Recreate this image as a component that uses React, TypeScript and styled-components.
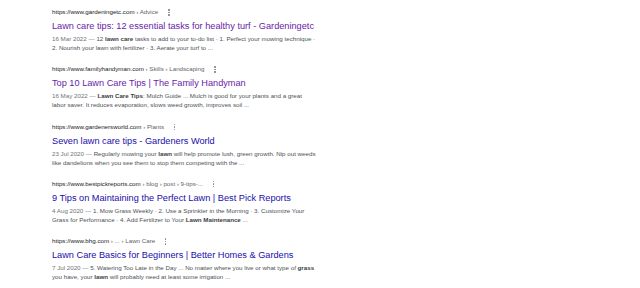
import React from 'react';
import styled, { createGlobalStyle } from 'styled-components';

const Global = createGlobalStyle`
  html, body {
    margin: 0;
    background: #ffffff;
    font-family: Arial, "Liberation Sans", sans-serif;
  }
`;

const Page = styled.div`
  width: 640px;
  height: 288px;
  padding: 7px 0 0 52px;
  box-sizing: border-box;
  display: flex;
  flex-direction: column;
  gap: 12.25px;
  overflow: hidden;
`;

const Result = styled.div`
  display: flex;
  flex-direction: column;
`;

const UrlRow = styled.div`
  height: 10px;
  line-height: 10px;
  font-size: 6.2px;
  color: #202124;
  white-space: nowrap;
`;

const Crumbs = styled.span`
  color: #5f6368;
`;

const Kebab = styled.span`
  display: inline-flex;
  flex-direction: column;
  vertical-align: middle;
  gap: 1.2px;
  margin-left: 10px;
  span {
    width: 1.3px;
    height: 1.3px;
    border-radius: 50%;
    background: #80868b;
  }
`;

const Title = styled.a<{ $visited: boolean }>`
  display: block;
  font-size: 9.2px;
  line-height: 13px;
  margin-top: 3px;
  color: ${(p) => (p.$visited ? '#681da8' : '#1a0dab')};
  text-decoration: none;
  white-space: nowrap;
`;

const Snippet = styled.div`
  margin-top: 1px;
  font-size: 6.2px;
  line-height: 9px;
  color: #4d5156;
  b {
    color: #3c4043;
  }
`;

const SnippetLine = styled.div`
  white-space: nowrap;
`;

const Date = styled.span`
  color: #70757a;
`;

type Item = {
  site: string;
  crumbs: string;
  title: string;
  visited: boolean;
  date: string;
  lines: [React.ReactNode, React.ReactNode];
};

const items: Item[] = [
  {
    site: 'https://www.gardeningetc.com',
    crumbs: ' › Advice',
    title: 'Lawn care tips: 12 essential tasks for healthy turf - Gardeningetc',
    visited: true,
    date: '16 Mar 2022',
    lines: [
      <>12 <b>lawn care</b> tasks to add to your to-do list · 1. Perfect your mowing technique ·</>,
      <>2. Nourish your lawn with fertilizer · 3. Aerate your turf to ...</>,
    ],
  },
  {
    site: 'https://www.familyhandyman.com',
    crumbs: ' › Skills › Landscaping',
    title: 'Top 10 Lawn Care Tips | The Family Handyman',
    visited: true,
    date: '16 May 2022',
    lines: [
      <><b>Lawn Care Tips</b>: Mulch Guide ... Mulch is good for your plants and a great</>,
      <>labor saver. It reduces evaporation, slows weed growth, improves soil ...</>,
    ],
  },
  {
    site: 'https://www.gardenersworld.com',
    crumbs: ' › Plants',
    title: 'Seven lawn care tips - Gardeners World',
    visited: false,
    date: '23 Jul 2020',
    lines: [
      <>Regularly mowing your <b>lawn</b> will help promote lush, green growth. Nip out weeds</>,
      <>like dandelions when you see them to stop them competing with the ...</>,
    ],
  },
  {
    site: 'https://www.bestpickreports.com',
    crumbs: ' › blog › post › 9-tips-...',
    title: '9 Tips on Maintaining the Perfect Lawn | Best Pick Reports',
    visited: false,
    date: '4 Aug 2020',
    lines: [
      <>1. Mow Grass Weekly · 2. Use a Sprinkler in the Morning · 3. Customize Your</>,
      <>Grass for Performance · 4. Add Fertilizer to Your <b>Lawn Maintenance</b> ...</>,
    ],
  },
  {
    site: 'https://www.bhg.com',
    crumbs: ' › ... › Lawn Care',
    title: 'Lawn Care Basics for Beginners | Better Homes & Gardens',
    visited: false,
    date: '7 Jul 2020',
    lines: [
      <>5. Watering Too Late in the Day ... No matter where you live or what type of <b>grass</b></>,
      <>you have, your <b>lawn</b> will probably need at least some irrigation ...</>,
    ],
  },
];

export default function App() {
  return (
    <>
      <Global />
      <Page>
        {items.map((it) => (
          <Result key={it.site}>
            <UrlRow>
              <span>{it.site}</span>
              <Crumbs>{it.crumbs}</Crumbs>
              <Kebab>
                <span />
                <span />
                <span />
              </Kebab>
            </UrlRow>
            <Title href="#" $visited={it.visited}>
              {it.title}
            </Title>
            <Snippet>
              <SnippetLine>
                <Date>{it.date} — </Date>
                {it.lines[0]}
              </SnippetLine>
              <SnippetLine>{it.lines[1]}</SnippetLine>
            </Snippet>
          </Result>
        ))}
      </Page>
    </>
  );
}
